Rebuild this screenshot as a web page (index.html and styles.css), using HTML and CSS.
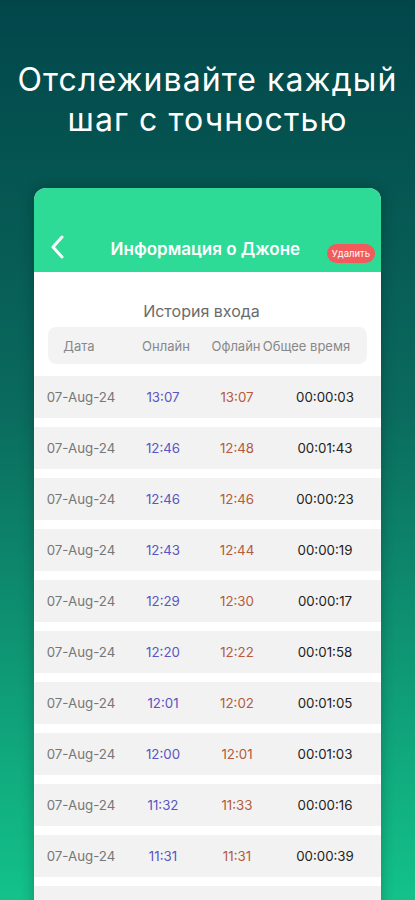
FILE: index.html
```html
<!DOCTYPE html>
<html lang="ru">
<head>
    <meta charset="UTF-8">
    <meta name="viewport" content="width=device-width, initial-scale=1.0">
    <title>История входа</title>
    <link rel="stylesheet" href="styles.css">
</head>
<body>
    <header class="promo">
        <h1>Отслеживайте каждый<br>шаг с точностью</h1>
    </header>

    <main class="card">
        <div class="card-top">
            <svg class="back" width="14" height="24" viewBox="0 0 14 24">
                <path d="M12 2 L3 12 L12 22" fill="none" stroke="#fff" stroke-width="3" stroke-linecap="round" stroke-linejoin="round"/>
            </svg>
            <span class="title">Информация о Джоне</span>
            <button class="delete">Удалить</button>
        </div>

        <div class="card-body">
            <h2>История входа</h2>
            <div class="head-row">
                <span>Дата</span>
                <span>Онлайн</span>
                <span>Офлайн</span>
                <span>Общее время</span>
            </div>

            <div class="rows">
                <div class="row"><span class="date">07-Aug-24</span><span class="on">13:07</span><span class="off">13:07</span><span class="total">00:00:03</span></div>
                <div class="row"><span class="date">07-Aug-24</span><span class="on">12:46</span><span class="off">12:48</span><span class="total">00:01:43</span></div>
                <div class="row"><span class="date">07-Aug-24</span><span class="on">12:46</span><span class="off">12:46</span><span class="total">00:00:23</span></div>
                <div class="row"><span class="date">07-Aug-24</span><span class="on">12:43</span><span class="off">12:44</span><span class="total">00:00:19</span></div>
                <div class="row"><span class="date">07-Aug-24</span><span class="on">12:29</span><span class="off">12:30</span><span class="total">00:00:17</span></div>
                <div class="row"><span class="date">07-Aug-24</span><span class="on">12:20</span><span class="off">12:22</span><span class="total">00:01:58</span></div>
                <div class="row"><span class="date">07-Aug-24</span><span class="on">12:01</span><span class="off">12:02</span><span class="total">00:01:05</span></div>
                <div class="row"><span class="date">07-Aug-24</span><span class="on">12:00</span><span class="off">12:01</span><span class="total">00:01:03</span></div>
                <div class="row"><span class="date">07-Aug-24</span><span class="on">11:32</span><span class="off">11:33</span><span class="total">00:00:16</span></div>
                <div class="row"><span class="date">07-Aug-24</span><span class="on">11:31</span><span class="off">11:31</span><span class="total">00:00:39</span></div>
                <div class="row"></div>
            </div>
        </div>
    </main>
</body>
</html>
```

FILE: styles.css
```css
html, body {
    margin: 0;
    padding: 0;
}

body {
    width: 415px;
    height: 900px;
    overflow: hidden;
    font-family: 'Inter', 'Roboto', sans-serif;
    background: linear-gradient(180deg, #02464a 0%, #0a6a5d 45%, #13c28a 100%);
    color: #333;
}

.promo {
    padding-top: 60px;
    text-align: center;
}

.promo h1 {
    margin: 0;
    color: #fff;
    font-size: 32px;
    font-weight: 400;
    line-height: 40px;
    letter-spacing: 1.1px;
}

.card {
    width: 347px;
    margin: 48px 0 0 34px;
    border-radius: 12px;
    overflow: hidden;
    background-color: #fff;
    box-shadow: 0 0 14px rgba(0, 0, 0, 0.25);
    height: 760px;
}

.card-top {
    height: 84px;
    background-color: #2edb96;
    display: flex;
    align-items: flex-end;
    padding: 0 6px 6px 16px;
    box-sizing: border-box;
    gap: 10px;
}

.back {
    margin-bottom: 7px;
}

.title {
    flex: 1;
    text-align: center;
    color: #fff;
    font-size: 17px;
    font-weight: 600;
    line-height: 34px;
    margin-left: 20px;
}

.delete {
    background-color: #f25b5b;
    color: #fff;
    border: none;
    border-radius: 10px;
    font-family: inherit;
    font-size: 9.5px;
    line-height: 11px;
    padding: 4px 5px;
    margin-bottom: 3px;
}

.card-body {
    padding-top: 27px;
}

h2 {
    margin: 0;
    padding-right: 12px;
    text-align: center;
    font-size: 16px;
    font-weight: 400;
    color: #6b6b6b;
    line-height: 24px;
}

.head-row {
    margin: 4px 14px 12px;
    height: 37px;
    background-color: #f3f3f3;
    border-radius: 8px;
    display: grid;
    grid-template-columns: 62px 112px 28px 113px;
    align-items: center;
    justify-items: center;
    white-space: nowrap;
    font-size: 13px;
    color: #888;
}

.rows {
    display: flex;
    flex-direction: column;
    gap: 9px;
}

.row {
    height: 42px;
    flex-shrink: 0;
    background-color: #f2f2f2;
    display: grid;
    grid-template-columns: 94px 70px 78px 98px;
    align-items: center;
    justify-items: center;
    font-size: 13.3px;
}

.date {
    color: #777;
}

.on {
    color: #5a55c2;
}

.off {
    color: #b55a3c;
}

.total {
    color: #222;
}
```
